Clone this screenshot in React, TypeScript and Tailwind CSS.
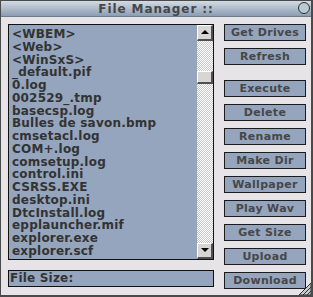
import React from 'react';

const files = [
  '<WBEM>',
  '<Web>',
  '<WinSxS>',
  '_default.pif',
  '0.log',
  '002529_.tmp',
  'basecsp.log',
  'Bulles de savon.bmp',
  'cmsetacl.log',
  'COM+.log',
  'comsetup.log',
  'control.ini',
  'CSRSS.EXE',
  'desktop.ini',
  'DtcInstall.log',
  'epplauncher.mif',
  'explorer.exe',
  'explorer.scf',
];

const actions = [
  ['Get Drives', 'Refresh'],
  ['Execute', 'Delete', 'Rename', 'Make Dir', 'Wallpaper', 'Play Wav', 'Get Size', 'Upload', 'Download'],
];

const font = { fontFamily: '"DejaVu Sans", Verdana, sans-serif' };

const ScrollBtn: React.FC<{ down?: boolean }> = ({ down }) => (
  <div className="w-[16px] h-[16px] bg-[#d8d5d2] border-t border-l border-t-white border-l-white border-b-2 border-r-2 border-b-[#505050] border-r-[#505050] flex items-center justify-center">
    <svg width="8" height="5" viewBox="0 0 8 5">
      {down ? <polygon points="0,0 8,0 4,4" fill="#000" /> : <polygon points="4,0 8,4 0,4" fill="#000" />}
    </svg>
  </div>
);

const Button: React.FC<{ label: string }> = ({ label }) => (
  <div className="h-[17px] w-[82px] border border-[#1c1c1c] bg-[#94a5bd] text-[#474747] text-[11px] font-bold leading-[15px] text-center tracking-[0.3px]">
    {label}
  </div>
);

export default function App() {
  return (
    <div style={font} className="w-[313px] h-[297px] bg-[#e7e4e7] border border-[#4a4a4a] border-r-2 border-b-2 flex flex-col relative overflow-hidden">
      <div className="h-[16px] shrink-0 bg-gradient-to-b from-[#d3dbe4] to-[#8c9db3] border-b border-[#6d7a8a] flex items-center justify-center relative">
        <span className="text-[12px] font-bold text-[#474747] leading-none tracking-[0.9px]">File Manager ::</span>
        <div className="absolute right-[1px] top-[1px] w-[12px] h-[12px] rounded-full bg-[#b7cbd3] border border-[#2e2e2e]" />
      </div>
      <div className="flex pl-[7px] pt-[7px] gap-[10px]">
        <div className="flex flex-col w-[206px]">
          <div className="h-[236px] border border-[#111] bg-[#94a5bd] flex">
            <div className="flex-1 pl-[3px] pt-[3px] overflow-hidden">
              {files.map((f) => (
                <div key={f} className="text-[12px] font-bold text-[#333] leading-[12.75px] tracking-[0.2px] whitespace-nowrap">
                  {f}
                </div>
              ))}
            </div>
            <div className="w-[16px] flex flex-col bg-[repeating-conic-gradient(#c9c9c9_0%_25%,#ffffff_0%_50%)] bg-[length:2px_2px]">
              <ScrollBtn />
              <div className="h-[30px]" />
              <div className="w-[16px] h-[13px] bg-[#d8d5d2] border-t border-l border-t-white border-l-white border-b-2 border-r-2 border-b-[#505050] border-r-[#505050]" />
              <div className="flex-1" />
              <ScrollBtn down />
            </div>
          </div>
          <div className="mt-[10px] h-[17px] border border-[#111] bg-[#94a5bd] text-[12px] font-bold text-[#333] leading-[15px] pl-[1px] tracking-[0.2px]">
            File Size:
          </div>
        </div>
        <div className="flex flex-col">
          <div className="flex flex-col gap-[7px]">
            {actions[0].map((a) => (
              <Button key={a} label={a} />
            ))}
          </div>
          <div className="flex flex-col gap-[7px] mt-[15px]">
            {actions[1].map((a) => (
              <Button key={a} label={a} />
            ))}
          </div>
        </div>
      </div>
      <svg className="absolute right-0 bottom-0" width="12" height="12" viewBox="0 0 12 12">
        <polygon points="12,0 12,12 0,12" fill="#c4cbd6" stroke="#333" strokeWidth="1" />
        <line x1="12" y1="4" x2="4" y2="12" stroke="#333" />
        <line x1="12" y1="8" x2="8" y2="12" stroke="#333" />
      </svg>
    </div>
  );
}
